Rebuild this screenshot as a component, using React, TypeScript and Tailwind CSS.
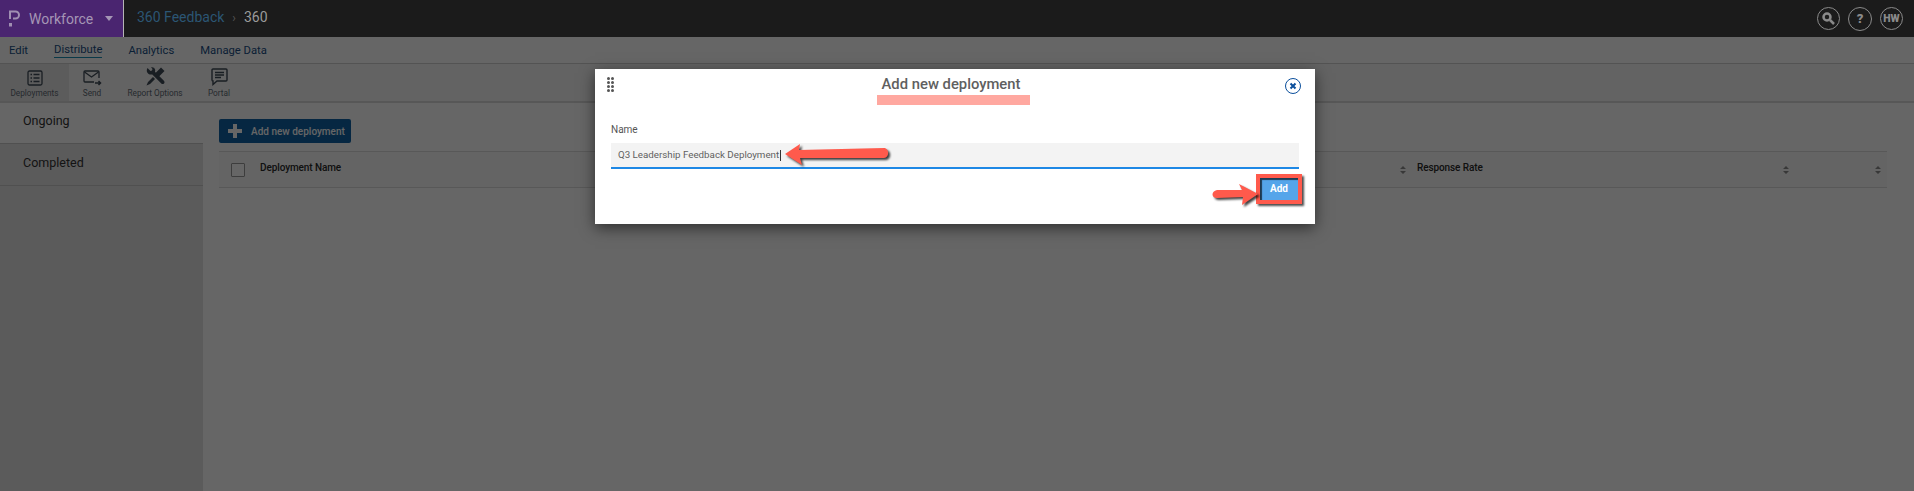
const menus = ['Edit', 'Distribute', 'Analytics', 'Manage Data'];

const DeploymentsIcon = () => (
  <svg width="16" height="16" viewBox="0 0 16 16" fill="none" stroke="#3f4b57" strokeWidth="1.3">
    <rect x="1" y="1" width="14" height="14" rx="1.5" />
    <path d="M3.500 4.500h1.500M6.500 4.500h6M3.500 8h1.500M6.500 8h6M3.500 11.500h1.500M6.500 11.500h6" />
  </svg>
);

const SendIcon = () => (
  <svg width="19" height="16" viewBox="0 0 19 16" fill="none" stroke="#3f4b57" strokeWidth="1.3">
    <path d="M11 12H2a1 1 0 0 1-1-1V2a1 1 0 0 1 1-1h13a1 1 0 0 1 1 1v6" />
    <path d="M1.500 2l7 5 7-5" />
    <path d="M12 13h5M15.500 11l2 2-2 2" strokeWidth="1.5" />
  </svg>
);

const ToolsIcon = () => (
  <svg width="19" height="19" viewBox="0 0 19 19" fill="#3f4b57">
    <path d="M1.500 1 4.500 4 6 3.500 6.500 2 5 .3C7-.3 9 1 9.200 3c0 .6 0 1.200-.3 1.700l9 9c.8.9.8 1.900.1 2.700-.8.800-1.900.8-2.700 0l-9-9C4.200 8 1.800 7 1 5 .6 3.600.8 2.200 1.500 1Z" />
    <path d="M15 .5l3.500 3.500-6.500 6.500-3.500-3.500ZM7 10l2 2-5 5-3.500 1.500L2 15Z" />
  </svg>
);

const PortalIcon = () => (
  <svg width="17" height="18" viewBox="0 0 17 18" fill="none" stroke="#3f4b57" strokeWidth="1.4">
    <path d="M2 1h13a1 1 0 0 1 1 1v10a1 1 0 0 1-1 1H6l-4 3.500V13a1 1 0 0 1-1-1V2a1 1 0 0 1 1-1Z" />
    <path d="M4 4.500h9M4 7h9M4 9.500h6" />
  </svg>
);

const SortIcon = () => (
  <svg width="6" height="8" viewBox="0 0 6 8" fill="#8c8c8c">
    <path d="M3 0l3 3H0ZM3 8 0 5h6Z" />
  </svg>
);

const tools = [
  { label: 'Deployments', icon: <DeploymentsIcon />, width: 'w-[69px]', active: true },
  { label: 'Send', icon: <SendIcon />, width: 'w-[46px]', active: false },
  { label: 'Report Options', icon: <ToolsIcon />, width: 'w-[80px]', active: false },
  { label: 'Portal', icon: <PortalIcon />, width: 'w-[48px]', active: false },
];

const ArrowLeft = () => (
  <svg width="106" height="24" viewBox="0 0 106 24" className="drop-shadow-[2px_2px_1px_rgba(0,0,0,0.75)]">
    <path d="M1 11 16 1l-1 6 85-2c5 0 6 9 0 10l-84 0 2 7Z" fill="#ff5a4c" />
  </svg>
);

const ArrowRight = () => (
  <svg width="48" height="22" viewBox="0 0 48 22" className="drop-shadow-[2px_2px_1px_rgba(0,0,0,0.75)]">
    <path d="M46 10 27 0l3 6-25 0c-6 1-6 8 0 8l26-1-1 8Z" fill="#ff5a4c" />
  </svg>
);

export default function App() {
  return (
    <div className="relative h-[491px] w-[1914px] overflow-hidden bg-white font-['Roboto',sans-serif]">
      {/* Top bar */}
      <div className="relative z-10 flex h-[37px] items-center bg-[#1b1b1b]">
        <div className="flex h-full w-[124px] items-center border-r border-[#b5b5b5] bg-[#4a2570] pl-[9px]">
          <svg width="11" height="17" viewBox="0 0 11 17" fill="none" stroke="#a08fb2" strokeWidth="2" className="mr-[9px]">
            <path d="M1 9V1.500h5.500a3.500 3.500 0 0 1 0 7H4" />
            <path d="M0 13h3v3.500H0Z" fill="#a08fb2" stroke="none" />
          </svg>
          <span className="pt-[1px] text-[14px] text-[#a596b5]">Workforce</span>
          <span className="ml-[12px] h-0 w-0 border-x-[4.500px] border-t-[5px] border-x-transparent border-t-[#a596b5]" />
        </div>
        <span className="ml-[13px] mb-[3px] text-[14px] text-[#2b5674]">360 Feedback</span>
        <span className="mx-[8px] mb-[2px] text-[12px] text-[#555555]">›</span>
        <span className="mb-[3px] text-[14px] text-[#9a9a9a]">360</span>
        <div className="ml-auto mr-[11px] flex items-center gap-[8px]">
          <div className="flex h-[23px] w-[23px] items-center justify-center rounded-full border border-[#8a8a8a]">
            <svg width="13" height="13" viewBox="0 0 13 13" fill="none" stroke="#8a8a8a">
              <circle cx="5" cy="5" r="3.500" strokeWidth="2.500" />
              <path d="M8 8l4 4" strokeWidth="2.500" />
            </svg>
          </div>
          <div className="flex h-[24px] w-[24px] items-center justify-center rounded-full border border-[#8a8a8a] text-[13px] font-black text-[#8a8a8a]">?</div>
          <div className="flex h-[23px] w-[23px] items-center justify-center rounded-full border border-[#8a8a8a] text-[10.500px] font-black text-[#8a8a8a]">HW</div>
        </div>
      </div>

      {/* Menu */}
      <div className="flex h-[27px] items-center gap-[26px] border-b border-[#cfcfcf] pl-[9px] text-[11.250px] text-[#1b4f86]">
        {menus.map((m) => (
          <span key={m} className={m === 'Distribute' ? 'border-b border-[#1b8fb5] leading-[15px]' : 'leading-[15px]'}>
            {m}
          </span>
        ))}
      </div>

      {/* Toolbar */}
      <div className="flex h-[39px] border-b-2 border-[#d9d9d9] bg-[#f7f7f7]">
        {tools.map((t) => (
          <div key={t.label} className={`flex ${t.width} flex-col items-center justify-end pb-[2px] ${t.active ? 'bg-[#e6e6e6]' : ''}`}>
            {t.icon}
            <span className="mt-[2px] text-[8.250px] leading-[11px] text-[#5e6a75]">{t.label}</span>
          </div>
        ))}
      </div>

      <div className="flex">
        {/* Sidebar */}
        <div className="h-[389px] w-[203px] bg-[#e3e3e3]">
          <div className="flex h-[41px] items-center border-b border-[#c8c8c8] bg-white pb-[3px] pl-[23px] text-[12.500px] text-[#333333]">Ongoing</div>
          <div className="flex h-[42px] items-center border-b border-[#c8c8c8] pb-[2px] pl-[23px] text-[12.500px] text-[#333333]">Completed</div>
        </div>

        {/* Main */}
        <div className="flex-1 pl-[16px] pr-[27px] pt-[16px]">
          <div className="flex h-[24px] w-[132px] items-center rounded-[2px] bg-[#0f62a6] pl-[9px]">
            <svg width="14" height="14" viewBox="0 0 14 14" fill="#ffffff">
              <path d="M5 0h4v5h5v4H9v5H5V9H0V5h5Z" />
            </svg>
            <span className="ml-[9px] text-[10px] font-medium text-white">Add new deployment</span>
          </div>
          <div className="mt-[8px] flex h-[37px] items-center border-y border-[#dddddd] bg-[#f9f9f9] text-[10px] font-medium tracking-[-0.1px] text-[#2a2a2a]">
            <div className="ml-[12px] h-[14px] w-[14px] rounded-[1px] border border-[#999999] bg-white" />
            <span className="mb-[4px] ml-[15px] flex-1">Deployment Name</span>
            <div className="mr-[11px]"><SortIcon /></div>
            <span className="mb-[4px] w-[366px]">Response Rate</span>
            <div className="w-[92px]"><SortIcon /></div>
            <div className="mr-[6px]"><SortIcon /></div>
          </div>
        </div>
      </div>

      {/* Dim overlay */}
      <div className="absolute inset-0 bg-black/60" />

      {/* Dialog */}
      <div className="absolute left-[595px] top-[69px] h-[155px] w-[720px] bg-white px-[16px] shadow-[0_4px_14px_rgba(0,0,0,0.55)]">
        <div className="relative h-[53px]">
          <div className="absolute left-[-4px] top-[8px] grid grid-cols-2 gap-px">
            {Array.from({ length: 8 }).map((_, i) => (
              <span key={i} className="h-[3px] w-[3px] rounded-full bg-[#555555]" />
            ))}
          </div>
          <div className="absolute left-[266px] top-[26px] h-[10px] w-[153px] bg-[#ffa8a0]" />
          <h2 className="relative pr-[8px] pt-[4px] text-center text-[14.800px] font-medium text-[#5f5f5f]">Add new deployment</h2>
          <div className="absolute left-[674px] top-[9px] flex h-[16px] w-[16px] items-center justify-center rounded-full border-[1.500px] border-[#0b4f9c]">
            <svg width="8" height="8" viewBox="0 0 8 8" stroke="#0b4f9c" strokeWidth="2">
              <path d="M1.500 1.500l5 5M6.500 1.500l-5 5" />
            </svg>
          </div>
        </div>
        <div className="text-[10px] leading-[16px] text-[#555555]">Name</div>
        <div className="mt-[5px] flex h-[26px] w-[688px] items-center border-b-2 border-[#1e88e5] bg-[#f3f3f3] pl-[7px] text-[9.750px] text-[#5f5f5f]">
          Q3 Leadership Feedback Deployment
          <span className="ml-[1px] h-[11px] w-px bg-[#333333]" />
        </div>
        <div className="mr-[-3px] mt-[5px] flex justify-end">
          <div className="flex h-[30px] w-[46px] items-center justify-center border-[4px] border-[#ff5a4c] bg-[#55a5ea] pb-[2px] text-[10px] font-bold text-white shadow-[inset_2px_2px_1px_rgba(0,0,0,0.65),2px_2px_2px_rgba(0,0,0,0.7)]">
            Add
          </div>
        </div>
      </div>

      {/* Annotation arrows */}
      <div className="absolute left-[784px] top-[143px]"><ArrowLeft /></div>
      <div className="absolute left-[1212px] top-[184px]"><ArrowRight /></div>
    </div>
  );
}
